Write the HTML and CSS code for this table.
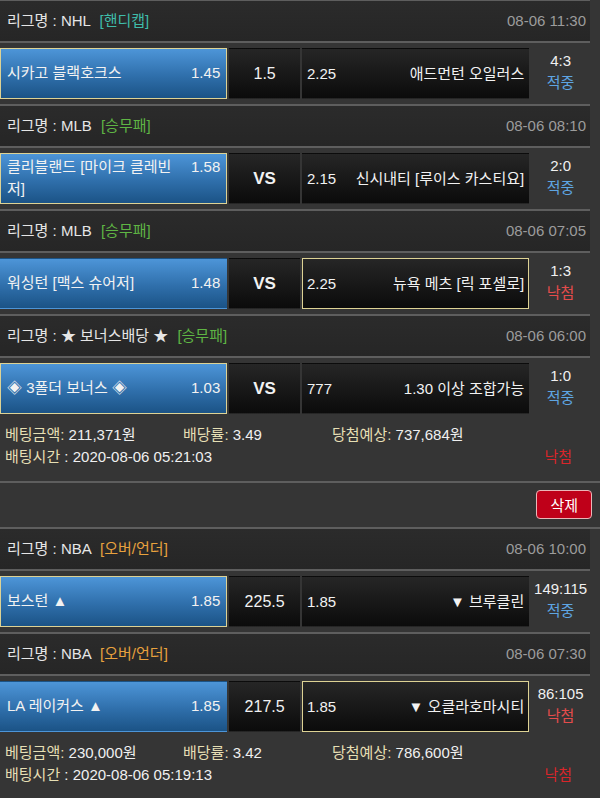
FILE: index.html
```html
<!DOCTYPE html>
<html lang="ko">
<head>
  <meta charset="UTF-8" />
  <meta name="viewport" content="width=device-width, initial-scale=1" />
  <title>베팅내역</title>
  <link rel="stylesheet" href="styles.css">
</head>
<body>

  <div class="slip slip-first">
    <div class="game">
      <div class="league">
        <span class="league-name">리그명 : NHL <span class="tag tag-handi">[핸디캡]</span></span>
        <span class="league-time">08-06 11:30</span>
      </div>
      <div class="match">
        <div class="pick home picked"><div class="pick-line"><span class="team">시카고 블랙호크스</span><span class="odds">1.45</span></div></div>
        <div class="pick mid">1.5</div>
        <div class="pick away"><span class="odds">2.25</span><span class="team">애드먼턴 오일러스</span></div>
        <div class="result"><span class="score">4:3</span><span class="state win">적중</span></div>
      </div>
    </div>

    <div class="game">
      <div class="league">
        <span class="league-name">리그명 : MLB <span class="tag tag-wdl">[승무패]</span></span>
        <span class="league-time">08-06 08:10</span>
      </div>
      <div class="match">
        <div class="pick home picked"><div class="pick-line"><span class="team">클리블랜드 [마이크 클레빈저]</span><span class="odds">1.58</span></div></div>
        <div class="pick mid vs">VS</div>
        <div class="pick away"><span class="odds">2.15</span><span class="team">신시내티 [루이스 카스티요]</span></div>
        <div class="result"><span class="score">2:0</span><span class="state win">적중</span></div>
      </div>
    </div>

    <div class="game">
      <div class="league">
        <span class="league-name">리그명 : MLB <span class="tag tag-wdl">[승무패]</span></span>
        <span class="league-time">08-06 07:05</span>
      </div>
      <div class="match">
        <div class="pick home"><div class="pick-line"><span class="team">워싱턴 [맥스 슈어저]</span><span class="odds">1.48</span></div></div>
        <div class="pick mid vs">VS</div>
        <div class="pick away picked"><span class="odds">2.25</span><span class="team">뉴욕 메츠 [릭 포셀로]</span></div>
        <div class="result"><span class="score">1:3</span><span class="state lose">낙첨</span></div>
      </div>
    </div>

    <div class="game">
      <div class="league">
        <span class="league-name">리그명 : ★ 보너스배당 ★ <span class="tag tag-wdl">[승무패]</span></span>
        <span class="league-time">08-06 06:00</span>
      </div>
      <div class="match">
        <div class="pick home picked"><div class="pick-line"><span class="team">◈ 3폴더 보너스 ◈</span><span class="odds">1.03</span></div></div>
        <div class="pick mid vs">VS</div>
        <div class="pick away"><span class="odds">777</span><span class="team">1.30 이상 조합가능</span></div>
        <div class="result"><span class="score">1:0</span><span class="state win">적중</span></div>
      </div>
    </div>

    <div class="bet-info">
      <div class="bet-row">
        <span class="bet-item bet-amount"><span class="label">베팅금액:</span> 211,371원</span>
        <span class="bet-item bet-rate"><span class="label">배당률:</span> 3.49</span>
        <span class="bet-item"><span class="label">당첨예상:</span> 737,684원</span>
      </div>
      <div class="bet-row">
        <span class="bet-item"><span class="label">배팅시간</span> : 2020-08-06 05:21:03</span>
        <span class="bet-state">낙첨</span>
      </div>
    </div>
  </div>

  <div class="actions">
    <button class="btn-delete">삭제</button>
  </div>

  <div class="slip">
    <div class="game">
      <div class="league">
        <span class="league-name">리그명 : NBA <span class="tag tag-ou">[오버/언더]</span></span>
        <span class="league-time">08-06 10:00</span>
      </div>
      <div class="match">
        <div class="pick home picked"><div class="pick-line"><span class="team">보스턴 ▲</span><span class="odds">1.85</span></div></div>
        <div class="pick mid">225.5</div>
        <div class="pick away"><span class="odds">1.85</span><span class="team">▼ 브루클린</span></div>
        <div class="result"><span class="score">149:115</span><span class="state win">적중</span></div>
      </div>
    </div>

    <div class="game">
      <div class="league">
        <span class="league-name">리그명 : NBA <span class="tag tag-ou">[오버/언더]</span></span>
        <span class="league-time">08-06 07:30</span>
      </div>
      <div class="match">
        <div class="pick home"><div class="pick-line"><span class="team">LA 레이커스 ▲</span><span class="odds">1.85</span></div></div>
        <div class="pick mid">217.5</div>
        <div class="pick away picked"><span class="odds">1.85</span><span class="team">▼ 오클라호마시티</span></div>
        <div class="result"><span class="score">86:105</span><span class="state lose">낙첨</span></div>
      </div>
    </div>

    <div class="bet-info">
      <div class="bet-row">
        <span class="bet-item bet-amount"><span class="label">베팅금액:</span> 230,000원</span>
        <span class="bet-item bet-rate"><span class="label">배당률:</span> 3.42</span>
        <span class="bet-item"><span class="label">당첨예상:</span> 786,600원</span>
      </div>
      <div class="bet-row">
        <span class="bet-item"><span class="label">배팅시간</span> : 2020-08-06 05:19:13</span>
        <span class="bet-state">낙첨</span>
      </div>
    </div>
  </div>

</body>
</html>
```

FILE: styles.css
```css
/* Base */
* {
  box-sizing: border-box;
}
body {
  margin: 0;
  background: #353535;
  color: #ececec;
  font-family: 'Liberation Sans', 'Noto Sans CJK KR', sans-serif;
  font-size: 15px;
  line-height: 22px;
}

/* Bet slip */
.slip {
  width: 590px;
}
.slip-first {
  border-top: 1px solid #5e5e5e;
}

.game + .game {
  border-top: 2px solid #5e5e5e;
}

/* League header */
.league {
  height: 42px;
  display: flex;
  align-items: center;
  justify-content: space-between;
  padding: 0 4px 0 7px;
  background: linear-gradient(#2b2b2b, #262626);
  border-bottom: 2px solid #5e5e5e;
}
.league-name {
  color: #e6e6e6;
}
.tag {
  margin-left: 5px;
}
.tag-handi {
  color: #3fbcaa;
}
.tag-wdl {
  color: #5fb544;
}
.tag-ou {
  color: #e8a23e;
}
.league-time {
  color: #9c9c9c;
}

/* Match row */
.match {
  display: flex;
  gap: 2px;
  padding: 5px 0;
}

.pick {
  height: 51px;
  display: flex;
  align-items: center;
  border: 1px solid transparent;
  background: linear-gradient(#262626, #0b0b0b);
  color: #f2f2f2;
}
.pick.picked {
  border-color: #ddd294;
}

.home {
  width: 228px;
  padding: 0 6px 2px;
  background: linear-gradient(#4d95d8, #2f6fab 55%, #1b5386);
}
.pick-line {
  width: 100%;
  display: flex;
  align-items: flex-start;
  justify-content: space-between;
  gap: 8px;
}
.pick-line .team {
  flex: 1;
}

.mid {
  width: 71px;
  justify-content: center;
  font-size: 16px;
}
.mid.vs {
  font-size: 17px;
  font-weight: 700;
}

.away {
  width: 228px;
  padding: 0 4px;
  justify-content: space-between;
  white-space: nowrap;
}

.result {
  width: 59px;
  display: flex;
  flex-direction: column;
  justify-content: center;
  align-items: center;
  padding-bottom: 3px;
}
.score {
  color: #f0f0f0;
}
.state.win {
  color: #5ea5e2;
}
.state.lose {
  color: #e44c4c;
}

/* Bet summary */
.bet-info {
  padding: 5px 5px 13px;
}
.bet-row {
  display: flex;
  align-items: center;
}
.bet-item {
  color: #f0f0f0;
}
.bet-amount {
  width: 178px;
}
.bet-rate {
  width: 149px;
}
.label {
  color: #e6dfb4;
}
.bet-state {
  margin-left: auto;
  margin-right: 13px;
  color: #d8262a;
}

/* Delete row */
.actions {
  height: 48px;
  display: flex;
  justify-content: flex-end;
  align-items: flex-start;
  padding: 7px 8px 0;
  border-top: 2px solid #5e5e5e;
  border-bottom: 2px solid #5e5e5e;
}
.btn-delete {
  height: 29px;
  padding: 0 13px;
  background: #bf0019;
  color: #fff;
  border: 1px solid #eab6b8;
  border-radius: 4px;
  font-family: inherit;
  font-size: 15px;
}
```
